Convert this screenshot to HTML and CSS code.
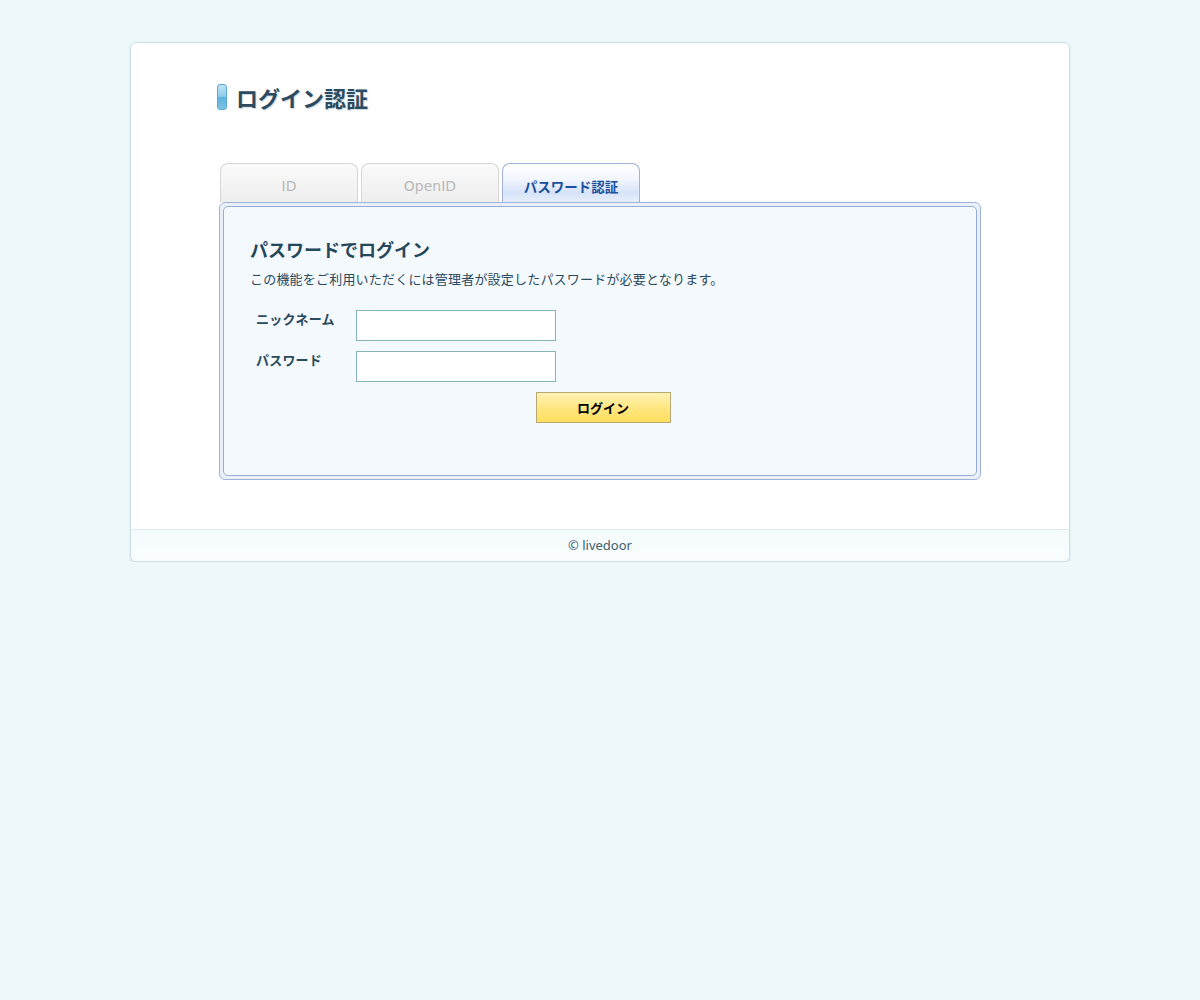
FILE: index.html
```html
<!DOCTYPE html>
<html lang="ja">
<head>
    <meta charset="utf-8">
    <title>ログイン認証</title>
    <link rel="stylesheet" href="styles.css">
</head>
<body>
    <div class="card">
        <div class="card-body">
            <h1 class="page-title"><span class="title-bar"></span>ログイン認証</h1>

            <ul class="tabs">
                <li class="tab">ID</li>
                <li class="tab">OpenID</li>
                <li class="tab active">パスワード認証</li>
            </ul>

            <div class="panel">
                <div class="panel-inner">
                    <h2 class="panel-title">パスワードでログイン</h2>
                    <p class="panel-desc">この機能をご利用いただくには管理者が設定したパスワードが必要となります。</p>

                    <form class="login-form">
                        <div class="form-row">
                            <label class="form-label" for="nick">ニックネーム</label>
                            <input class="form-input" type="text" id="nick">
                        </div>
                        <div class="form-row">
                            <label class="form-label" for="pass">パスワード</label>
                            <input class="form-input" type="password" id="pass">
                        </div>
                        <div class="form-submit">
                            <button class="login-button" type="button">ログイン</button>
                        </div>
                    </form>
                </div>
            </div>
        </div>
        <div class="footer">&copy; livedoor</div>
    </div>
</body>
</html>
```

FILE: styles.css
```css
body {
    margin: 0;
    background: #edf8fa;
    color: #2b4a5c;
    font-family: "Noto Sans", "Noto Sans CJK JP", sans-serif;
}

/* 外枠 */
.card {
    width: 938px;
    margin: 42px auto 0;
    background: #fff;
    border: 1px solid #cbdfe7;
    border-radius: 6px;
    box-shadow: 0 1px 2px rgba(150, 190, 205, 0.35);
    overflow: hidden;
}

.card-body {
    padding: 41px 88px 49px;
}

.page-title {
    display: flex;
    align-items: center;
    gap: 9px;
    margin: 0 0 0 -2px;
    height: 26px;
    font-family: "Noto Sans CJK JP", sans-serif;
    font-size: 22px;
    font-weight: bold;
    color: #2c4b5e;
    text-shadow: 1px 1px 1px #c9d7de;
}

.title-bar {
    display: block;
    width: 8px;
    height: 24px;
    border: 1px solid #5aa9d3;
    border-radius: 3px;
    background: linear-gradient(#bfe3f4, #8ccbea 50%, #5db3de 52%, #7ec3e6);
}

/* タブ */
.tabs {
    display: flex;
    gap: 3px;
    list-style: none;
    margin: 53px 0 0 1px;
    padding: 0;
}

.tab {
    box-sizing: border-box;
    width: 138px;
    height: 39px;
    border: 1px solid #d6d6d6;
    border-bottom: none;
    border-radius: 8px 8px 0 0;
    background: linear-gradient(#fafafa, #f3f3f3 60%, #eeeeee);
    text-align: center;
    line-height: 44px;
    font-family: "DejaVu Sans", "Noto Sans CJK JP", sans-serif;
    font-size: 14px;
    color: #b8b8b8;
}

.tab.active {
    border-color: #9fb3d5;
    background: linear-gradient(#ffffff, #f2f6fd 40%, #d6e3f8 75%, #e6eefb);
    font-family: "Noto Sans CJK JP", sans-serif;
    font-weight: bold;
    font-size: 13.5px;
    color: #1b4f9b;
}

/* パネル */
.panel {
    padding: 3px;
    border: 1px solid #9fb3d5;
    border-radius: 6px;
    background: #e9f0fa;
}

.panel-inner {
    padding: 29px 26px 52px;
    border: 1px solid #98acd2;
    border-radius: 5px;
    background: #f4f9fd;
}

.panel-title {
    margin: 0;
    font-family: "Noto Sans CJK JP", sans-serif;
    font-size: 18px;
    font-weight: bold;
    line-height: 26px;
    color: #24475a;
}

.panel-desc {
    margin: 8px 0 0;
    font-family: "Noto Sans CJK JP", sans-serif;
    font-size: 13px;
    letter-spacing: 0.2px;
    line-height: 18px;
    color: #2b4a5c;
}

.login-form {
    margin-top: 22px;
    padding-left: 6px;
}

.form-row {
    display: flex;
    align-items: flex-start;
    margin-bottom: 10px;
}

.form-label {
    width: 100px;
    padding-top: 1px;
    font-family: "Noto Sans CJK JP", sans-serif;
    font-size: 13px;
    font-weight: bold;
    letter-spacing: 0.2px;
    line-height: 16px;
    color: #2b4a5c;
}

.form-input {
    box-sizing: border-box;
    width: 200px;
    height: 31px;
    margin: 0;
    border: 1px solid #86b2bb;
    background: #fff;
    font-size: 14px;
}

.form-submit {
    display: flex;
    justify-content: center;
}

.login-button {
    box-sizing: border-box;
    width: 135px;
    height: 31px;
    border: 1px solid #b7a874;
    background: linear-gradient(#fff3b5, #ffe57a 60%, #ffdf5e);
    font-family: "Noto Sans CJK JP", sans-serif;
    font-size: 13px;
    font-weight: bold;
    color: #000;
    cursor: pointer;
}

.footer {
    height: 31px;
    border-top: 1px solid #dde9ee;
    background: linear-gradient(#f4fbfd, #f9fdfe);
    text-align: center;
    line-height: 31px;
    font-size: 13px;
    color: #3e5e70;
}
```
